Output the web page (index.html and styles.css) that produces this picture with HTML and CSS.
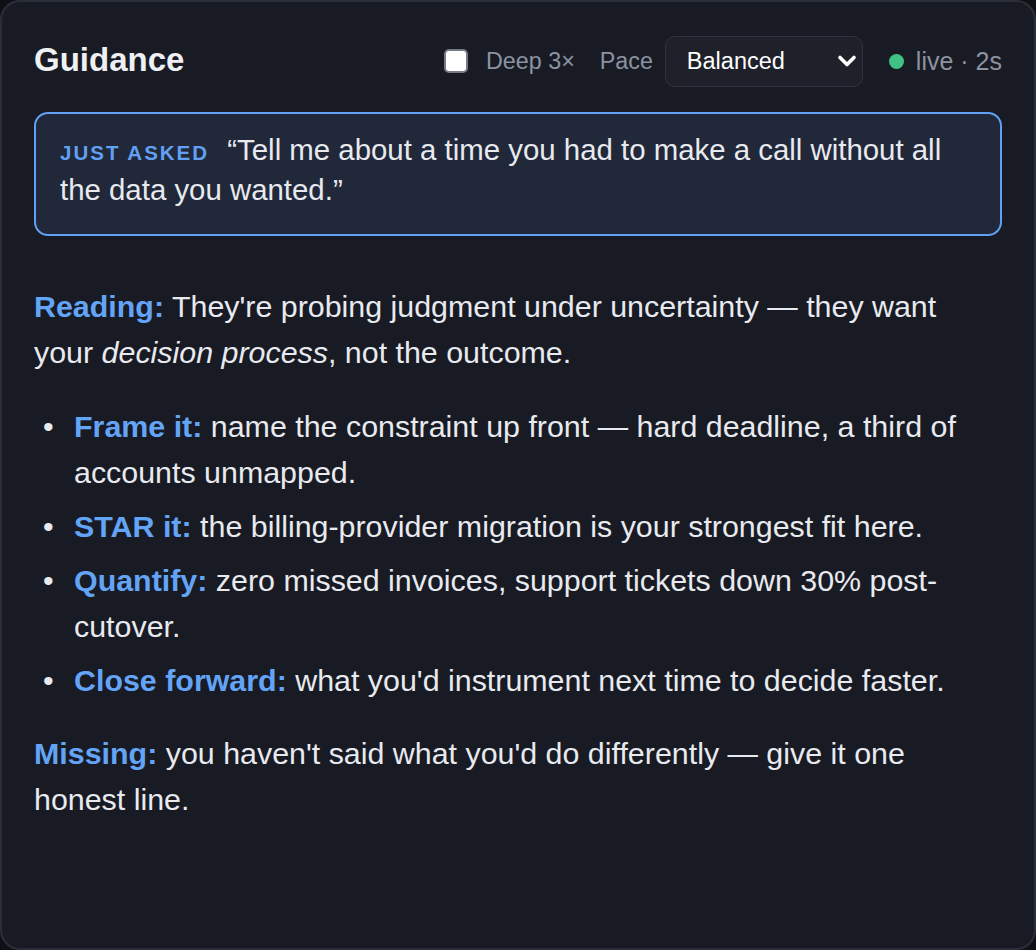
FILE: index.html
```html
<!DOCTYPE html>
<html lang="en">
<head>
    <meta charset="UTF-8">
    <meta name="viewport" content="width=device-width, initial-scale=1.0">
    <title>Guidance</title>
    <link rel="stylesheet" href="styles.css">
</head>
<body>
    <!-- Guidance panel -->
    <div class="panel">
        <div class="header">
            <h1>Guidance</h1>
            <div class="controls">
                <label class="deep">
                    <input type="checkbox" id="deep">
                    <span>Deep 3×</span>
                </label>
                <span class="muted">Pace</span>
                <div class="select-wrap">
                    <select id="pace">
                        <option>Slow</option>
                        <option selected>Balanced</option>
                        <option>Fast</option>
                    </select>
                    <svg class="chevron" width="20" height="14" viewBox="0 0 20 14">
                        <path d="M3 3.5 L10 10.5 L17 3.5" fill="none" stroke="#fff" stroke-width="3.6" stroke-linecap="round" stroke-linejoin="round"/>
                    </svg>
                </div>
                <span class="status"><span class="dot"></span>live · 2s</span>
            </div>
        </div>

        <div class="asked">
            <span class="tag">JUST ASKED</span>
            “Tell me about a time you had to make a call without all the data you wanted.”
        </div>

        <p class="reading"><b>Reading:</b> They're probing judgment under uncertainty — they want your <em>decision process</em>, not the outcome.</p>

        <ul class="tips">
            <li><b>Frame it:</b> name the constraint up front — hard deadline, a third of accounts unmapped.</li>
            <li><b>STAR it:</b> the billing-provider migration is your strongest fit here.</li>
            <li><b>Quantify:</b> zero missed invoices, support tickets down 30% post-cutover.</li>
            <li><b>Close forward:</b> what you'd instrument next time to decide faster.</li>
        </ul>

        <p class="missing"><b>Missing:</b> you haven't said what you'd do differently — give it one honest line.</p>
    </div>
</body>
</html>
```

FILE: styles.css
```css
html, body {
    margin: 0;
    padding: 0;
    background-color: #0e1015;
}
body {
    font-family: 'Liberation Sans', Arial, sans-serif;
    color: #e8eaef;
}
.panel {
    box-sizing: border-box;
    width: 1036px;
    height: 950px;
    background-color: #181b23;
    border: 2px solid #2a2e38;
    border-radius: 20px;
    padding: 33px 32px 32px 32px;
}
.header {
    display: flex;
    align-items: center;
    justify-content: space-between;
    height: 52px;
}
h1 {
    margin: 0 0 3px 0;
    font-size: 33px;
    font-weight: bold;
    color: #eef0f4;
}
.controls {
    display: flex;
    align-items: center;
    font-size: 23.3px;
    color: #8b93a1;
}
.deep {
    display: flex;
    align-items: center;
    gap: 18px;
    margin-right: 25px;
}
.deep input {
    appearance: none;
    -webkit-appearance: none;
    margin: 0;
    width: 24px;
    height: 24px;
    background-color: #fff;
    border: 2px solid #767b85;
    border-radius: 5px;
    box-sizing: border-box;
}
.muted {
    margin-right: 12px;
}
.select-wrap {
    position: relative;
    margin-right: 26px;
}
select {
    appearance: none;
    -webkit-appearance: none;
    width: 198px;
    height: 51px;
    background-color: #1e2129;
    color: #fff;
    border: 1.5px solid #2f3440;
    border-radius: 10px;
    font-family: 'Liberation Sans', Arial, sans-serif;
    font-size: 23.5px;
    padding: 0 0 0 21px;
}
.chevron {
    position: absolute;
    right: 6px;
    top: 18px;
    pointer-events: none;
}
.status {
    display: flex;
    align-items: center;
    gap: 12px;
    font-size: 25px;
}
.dot {
    width: 15px;
    height: 15px;
    border-radius: 50%;
    background-color: #3fc283;
}
.asked {
    margin-top: 25px;
    background-color: #202839;
    border: 2px solid #62a0f4;
    border-radius: 14px;
    padding: 16px 24px 24px 24px;
    font-size: 29.4px;
    line-height: 40px;
    color: #e8eaef;
}
.tag {
    font-size: 20.5px;
    line-height: 1;
    font-weight: bold;
    letter-spacing: 2px;
    color: #62a0f4;
    margin-right: 10px;
}
.reading, .missing {
    font-size: 30.4px;
    line-height: 46px;
    margin: 0;
}
.reading {
    margin-top: 47px;
}
b {
    color: #64a4f7;
}
.tips {
    font-size: 30.4px;
    line-height: 46px;
    margin: 28px 0 27px 0;
    padding-left: 40px;
}
.tips li {
    margin-bottom: 8px;
}
.tips li::marker {
    content: "\2022\2002\2006";
}
.tips li:last-child {
    margin-bottom: 0;
}
```
